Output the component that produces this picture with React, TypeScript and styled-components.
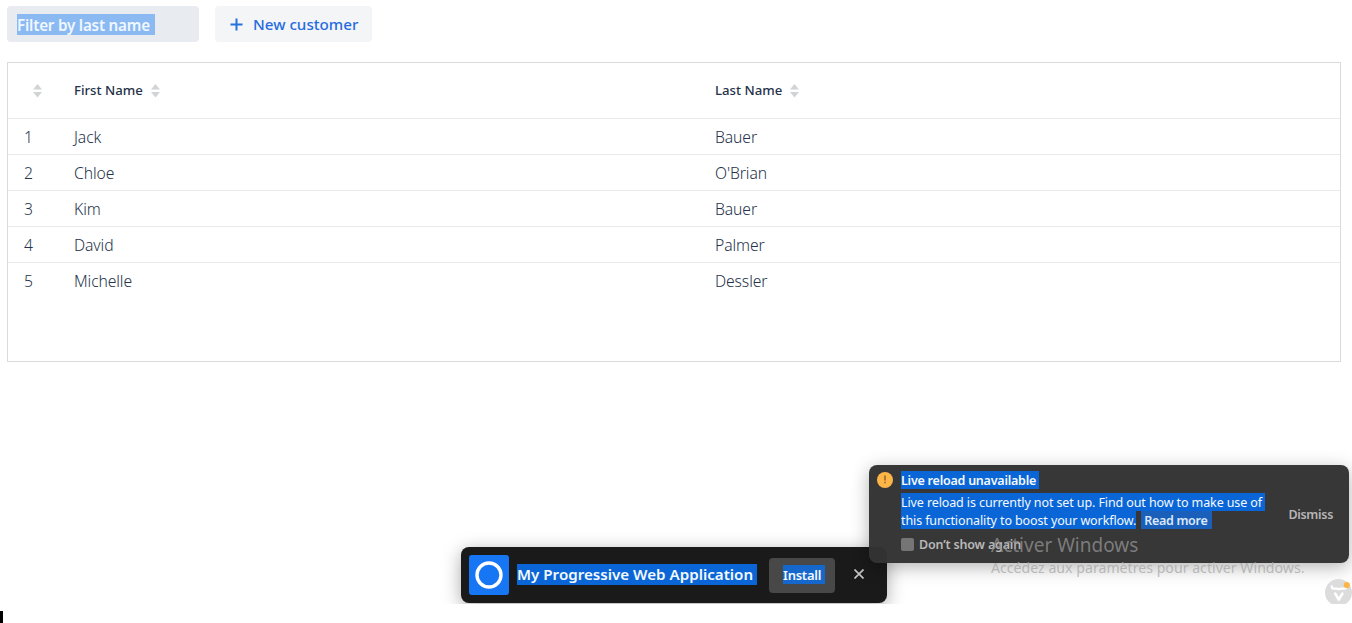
import React from "react";
import styled, { createGlobalStyle } from "styled-components";

const Global = createGlobalStyle`
  * { box-sizing: border-box; }
  body {
    margin: 0;
    background: #fff;
    font-family: "Noto Sans", "Open Sans", sans-serif;
    color: #26334a;
  }
`;

const Page = styled.div`
  position: relative;
  height: 623px;
  overflow: hidden;
`;

const View = styled.main`
  position: relative;
  height: 604px;
  padding: 6px 11px 0 7px;
  overflow: hidden;
`;

const Toolbar = styled.div`
  display: flex;
  gap: 16px;
  margin-bottom: 20px;
`;

const FilterField = styled.div`
  display: flex;
  width: 192px;
  height: 36px;
  padding: 8px 10px;
  border-radius: 4px;
  background: #e8ebef;
`;

const FilterText = styled.span`
  height: 21px;
  padding-right: 5px;
  background: #8bbaf3;
  color: #f0f7ff;
  font-size: 15.2px;
  font-weight: 600;
  line-height: 23px;
  letter-spacing: -0.2px;
  white-space: nowrap;
`;

const NewButton = styled.button`
  display: flex;
  align-items: center;
  width: 157px;
  height: 36px;
  padding: 0 0 0 15px;
  gap: 10px;
  border: 0;
  border-radius: 4px;
  background: #f3f5f7;
  color: #276be0;
  font: 500 15.2px/36px "Noto Sans", sans-serif;
  white-space: nowrap;
`;

const Grid = styled.section`
  height: 300px;
  border: 1px solid #d9dadb;
`;

const GridRow = styled.div<{ $header?: boolean; $last?: boolean }>`
  display: grid;
  grid-template-columns: 50px 1fr 1fr;
  align-items: center;
  height: ${(p) => (p.$header ? 56 : 36)}px;
  border-bottom: 1px solid ${(p) => (p.$last ? "transparent" : "#e8e9ea")};
  font-size: ${(p) => (p.$header ? 13.2 : 15.7)}px;
  font-weight: ${(p) => (p.$header ? 500 : 300)};
  letter-spacing: ${(p) => (p.$header ? 0 : -0.1)}px;
`;

const Cell = styled.div`
  display: flex;
  align-items: center;
  gap: 8px;
  padding: 1px 0 0 16px;
`;

const HeadCell = styled(Cell)<{ $narrow?: boolean }>`
  padding: 0 0 0 ${(p) => (p.$narrow ? 25 : 16)}px;
`;

const HeadLabel = styled.span`
  padding-bottom: 2px;
`;

const SortIcon = styled.svg`
  display: block;
  margin-top: 1px;
  fill: #d2d3d5;
`;

const InstallBar = styled.div`
  position: absolute;
  left: 461px;
  top: 547px;
  display: flex;
  align-items: center;
  width: 426px;
  height: 56px;
  padding: 0 8px;
  border-radius: 8px;
  background: #1a1a1a;
  box-shadow: 0 4px 18px rgba(0, 0, 0, 0.34);
`;

const Selected = styled.span<{ $size: number; $height: number; $end?: number; $weight?: number; $track?: number; $shade?: string }>`
  display: block;
  flex: none;
  width: max-content;
  height: ${(p) => p.$height}px;
  padding-right: ${(p) => p.$end ?? 0}px;
  background: ${(p) => p.$shade ?? "#0a66d6"};
  color: #f4f9ff;
  font-size: ${(p) => p.$size}px;
  font-weight: ${(p) => p.$weight ?? 400};
  line-height: ${(p) => p.$height + 1}px;
  letter-spacing: ${(p) => p.$track ?? 0}px;
  white-space: nowrap;
`;

const AppName = styled(Selected)`
  margin: 0 0 1px 8px;
  line-height: 21px;
`;

const InstallButton = styled.button`
  display: flex;
  justify-content: center;
  align-items: center;
  width: 66px;
  height: 35px;
  margin: 0 19px 0 12px;
  padding: 0 0 2px 4px;
  border: 0;
  border-radius: 4px;
  background: #484848;
  font-family: inherit;
`;

const CloseIcon = styled.svg`
  margin-bottom: 2px;
`;

const Notice = styled.aside`
  position: absolute;
  left: 869px;
  top: 465px;
  display: flex;
  width: 480px;
  height: 98px;
  padding: 6px 16px 0 8px;
  border-radius: 8px;
  background: rgba(51, 51, 51, 0.98);
  box-shadow: 0 4px 18px rgba(0, 0, 0, 0.3);
`;

const NoticeIcon = styled.svg`
  flex: none;
  margin: 1px 8px 0 0;
`;

const NoticeBody = styled.div`
  display: flex;
  flex: 1;
  flex-direction: column;
`;

const Message = styled.div`
  margin-top: 4px;
`;

const MessageLine = styled.div`
  display: flex;
  gap: 5px;
`;

const ReadMore = styled(Selected)`
  padding-left: 3px;
  color: #dce9fa;
`;

const CheckRow = styled.div`
  display: flex;
  align-items: center;
  gap: 5px;
  height: 18px;
  margin-top: 6px;
  color: #b9b9b9;
  font-size: 12.5px;
  font-weight: 600;
  letter-spacing: -0.17px;
`;

const CheckBox = styled.span`
  width: 13px;
  height: 13px;
  border-radius: 2px;
  background: #757575;
`;

const Dismiss = styled.button`
  height: 18px;
  margin-top: 35px;
  padding: 0;
  border: 0;
  background: none;
  color: #b6b6b6;
  font: 600 12.5px/18px "Noto Sans", sans-serif;
  letter-spacing: -0.3px;
`;

const Watermark = styled.div`
  position: absolute;
  left: 991px;
  top: 532px;
  color: rgba(150, 150, 150, 0.74);
  white-space: nowrap;
`;

const WatermarkTitle = styled.div`
  font-size: 19px;
  line-height: 26px;
`;

const WatermarkText = styled.div`
  color: rgba(165, 165, 165, 0.74);
  font-size: 14.15px;
  line-height: 20px;
`;

const DevTools = styled.svg`
  position: absolute;
  left: 1325px;
  top: 579px;
`;

const Caret = styled.div`
  position: absolute;
  left: 0;
  bottom: 0;
  width: 3px;
  height: 12px;
  background: #000;
`;

const customers = [
  ["Jack", "Bauer"],
  ["Chloe", "O'Brian"],
  ["Kim", "Bauer"],
  ["David", "Palmer"],
  ["Michelle", "Dessler"],
];

function Sorter() {
  return (
    <SortIcon width="9" height="14" viewBox="0 0 9 14">
      <path d="M4.5 0 9 5.5H0zM4.5 13.5 9 8H0z" />
    </SortIcon>
  );
}

export default function App() {
  return (
    <Page>
      <Global />
      <View>
        <Toolbar>
          <FilterField>
            <FilterText>Filter by last name</FilterText>
          </FilterField>
          <NewButton>
            <svg width="13" height="13" viewBox="0 0 13 13" stroke="#2472dc" strokeWidth="2">
              <path d="M6.5 .5v12M.5 6.5h12" />
            </svg>
            New customer
          </NewButton>
        </Toolbar>
        <Grid>
          <GridRow $header>
            <HeadCell $narrow><Sorter /></HeadCell>
            <HeadCell><HeadLabel>First Name</HeadLabel><Sorter /></HeadCell>
            <HeadCell><HeadLabel>Last Name</HeadLabel><Sorter /></HeadCell>
          </GridRow>
          {customers.map(([first, last], i) => (
            <GridRow key={first} $last={i === customers.length - 1}>
              <Cell>{i + 1}</Cell>
              <Cell>{first}</Cell>
              <Cell>{last}</Cell>
            </GridRow>
          ))}
        </Grid>

        <InstallBar>
          <svg width="40" height="40" viewBox="0 0 40 40">
            <rect width="40" height="40" rx="3" fill="#1676f3" />
            <circle cx="20" cy="20" r="12" fill="none" stroke="#fff" strokeWidth="3.4" />
          </svg>
          <AppName $size={15.15} $height={21} $end={4} $weight={600}>My Progressive Web Application</AppName>
          <InstallButton>
            <Selected $size={13} $height={19} $end={4} $weight={600} $track={-0.25} $shade="#1667cb">Install</Selected>
          </InstallButton>
          <CloseIcon width="10" height="10" viewBox="0 0 10 10" stroke="#c4c4c4" strokeWidth="1.7">
            <path d="M.5 .5l9 9M9.5 .5l-9 9" />
          </CloseIcon>
        </InstallBar>

        <Notice>
          <NoticeIcon width="16" height="16" viewBox="0 0 16 16">
            <circle cx="8" cy="8" r="8" fill="#fdb547" />
            <path d="M8 3.500v5M8 9.700v1.500" stroke="#8a6426" strokeWidth="1.500" />
          </NoticeIcon>
          <NoticeBody>
            <Selected $size={12.5} $height={18} $end={3} $weight={600} $track={-0.23}>Live reload unavailable</Selected>
            <Message>
              <Selected $size={12.5} $height={18} $end={3} $track={-0.107}>
                Live reload is currently not set up. Find out how to make use of
              </Selected>
              <MessageLine>
                <Selected $size={12.5} $height={18} $track={-0.11}>this functionality to boost your workflow.</Selected>
                <ReadMore $size={12.5} $height={18} $end={5} $weight={600} $track={-0.3} $shade="#1a60bb">Read more</ReadMore>
              </MessageLine>
            </Message>
            <CheckRow><CheckBox />Don’t show again</CheckRow>
          </NoticeBody>
          <Dismiss>Dismiss</Dismiss>
        </Notice>

        <DevTools width="27" height="27" viewBox="0 0 27 27">
          <circle cx="13.5" cy="13.5" r="13.5" fill="#dcdcdc" />
          <path d="M6.800 7.500q0 2.100 1.700 2.100h3q2.300 0 2.300 1.600 0-1.600 2.300-1.600h3q1.700 0 1.700-1.700" fill="none" stroke="#fff" strokeWidth="2.300" strokeLinecap="round" />
          <path d="M10.200 14.700l3.600 6 3.600-6" fill="none" stroke="#fff" strokeWidth="2.600" strokeLinecap="round" strokeLinejoin="round" />
          <circle cx="21.800" cy="6" r="3.100" fill="#fdb547" />
        </DevTools>

        <Watermark>
          <WatermarkTitle>Activer Windows</WatermarkTitle>
          <WatermarkText>Accédez aux paramètres pour activer Windows.</WatermarkText>
        </Watermark>
      </View>
      <Caret />
    </Page>
  );
}
